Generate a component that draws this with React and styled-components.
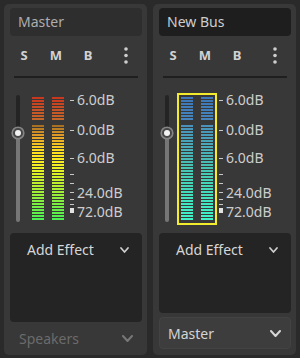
import React from "react";
import styled, { createGlobalStyle } from "styled-components";

const Global = createGlobalStyle`
  html, body { margin: 0; padding: 0; background: #2a2a2a; }
  body { font-family: "Noto Sans", "DejaVu Sans", sans-serif; }
  * { box-sizing: border-box; }
`;

const Mixer = styled.div`
  display: flex;
  gap: 6px;
  padding: 4px;
  width: 300px;
  height: 358px;
`;

const Panel = styled.div`
  width: 143px;
  height: 351px;
  background: #383838;
  border-radius: 5px;
  padding: 4px 5px 6px 6px;
  display: flex;
  flex-direction: column;
`;

const NameBox = styled.div`
  height: 28px;
  border-radius: 4px;
  background: ${(p) => (p.$active ? "#1e1e1e" : "#2e2e2e")};
  color: ${(p) => (p.$active ? "#cdcdcd" : "#adadad")};
  font-size: 14px;
  line-height: 28px;
  padding-left: 8px;
`;

const ButtonRow = styled.div`
  display: flex;
  align-items: center;
  height: 26px;
  margin: 6px 0 0 -2px;
`;

const ToggleButton = styled.div`
  width: 32px;
  text-align: center;
  font-size: 13px;
  font-weight: 700;
  color: #d2d2d2;
`;

const MenuButton = styled.div`
  margin-left: auto;
  margin-right: 8px;
  width: 16px;
  display: flex;
  justify-content: center;
`;

const Separator = styled.div`
  height: 2px;
  margin: 8px 4px 0 4px;
  background: #1f1f1f;
`;

const MeterRow = styled.div`
  display: flex;
  height: 132px;
  margin-top: 15px;
`;

const FaderColumn = styled.div`
  width: 16px;
  position: relative;
  display: flex;
  justify-content: center;
  padding-top: 2px;
`;

const FaderTrack = styled.div`
  width: 4px;
  height: 127px;
  border-radius: 2px;
  background: linear-gradient(to bottom, #242424 0 38px, #767676 38px 100%);
`;

const Knob = styled.svg`
  position: absolute;
  left: 1px;
  top: 33px;
`;

const MeterBox = styled.div`
  margin-left: 2px;
  border: 2px solid ${(p) => (p.$selected ? "#f2ec2c" : "transparent")};
  padding: 2px;
  height: 132px;
`;

const Scale = styled.div`
  position: relative;
  margin-left: 2px;
  flex: 1;
`;

const Tick = styled.div`
  position: absolute;
  left: 0;
  width: 4px;
  height: 1px;
  background: #c8c8c8;
`;

const Marker = styled.div`
  position: absolute;
  left: 0;
  top: 115px;
  width: 4px;
  height: 5px;
  background: #e2e2e2;
`;

const Label = styled.div`
  position: absolute;
  left: 7px;
  font-size: 14px;
  line-height: 14px;
  color: #cdcdcd;
  white-space: nowrap;
`;

const EffectsBox = styled.div`
  flex: 1;
  margin-top: 8px;
  background: #242424;
  border-radius: 4px;
`;

const AddEffect = styled.div`
  height: 33px;
  display: flex;
  align-items: center;
  justify-content: space-between;
  padding: 0 13px 0 17px;
  font-size: 14px;
  color: #d6d6d6;
`;

const Select = styled.div`
  display: flex;
  align-items: center;
  justify-content: space-between;
  font-size: 14px;
  padding: ${(p) => (p.$disabled ? "5px 8px 0 8px" : "0 9px 0 8px")};
  height: ${(p) => (p.$disabled ? "27px" : "32px")};
  margin-top: ${(p) => (p.$disabled ? "0" : "4px")};
  border-radius: 4px;
  background: ${(p) => (p.$disabled ? "transparent" : "#3d3d3d")};
  border: 1px solid ${(p) => (p.$disabled ? "transparent" : "#434343")};
  color: ${(p) => (p.$disabled ? "#6b6b6b" : "#d4d4d4")};
`;

function hex(c) {
  return [1, 3, 5].map((i) => parseInt(c.slice(i, i + 2), 16));
}
function interp(stops, y) {
  let a = stops[0], b = stops[stops.length - 1];
  for (let i = 0; i < stops.length - 1; i++) {
    if (y >= stops[i][0] && y <= stops[i + 1][0]) { a = stops[i]; b = stops[i + 1]; break; }
  }
  const t = b[0] === a[0] ? 0 : (y - a[0]) / (b[0] - a[0]);
  const ca = hex(a[1]), cb = hex(b[1]);
  return `rgb(${ca.map((v, i) => Math.round(v + (cb[i] - v) * t)).join(",")})`;
}

const PALETTES = {
  warm: {
    top: [[0, "#c8381e"], [21, "#c4662a"]],
    bottom: [[0, "#a87022"], [10, "#e49e28"], [25, "#ffe020"], [40, "#f4f220"], [60, "#b4f030"], [93, "#4cf050"]],
  },
  cool: {
    top: [[0, "#3d78b8"], [21, "#4584bc"]],
    bottom: [[0, "#4a92ba"], [20, "#4aaab8"], [40, "#48c2b2"], [60, "#44d8b8"], [93, "#40f2c8"]],
  },
};

function Meter({ palette }) {
  const p = PALETTES[palette];
  const rects = [];
  [0, 20].forEach((x) => {
    for (let i = 0; i < 8; i++) {
      const y = i * 3;
      rects.push(<rect key={`t${x}-${i}`} x={x} y={y} width={12} height={2} fill={interp(p.top, y)} />);
    }
    for (let j = 0; j < 32; j++) {
      const y = j * 3;
      rects.push(<rect key={`b${x}-${j}`} x={x} y={28 + y} width={12} height={2} fill={interp(p.bottom, y)} />);
    }
  });
  return (
    <svg width="32" height="124" viewBox="0 0 32 124" style={{ display: "block" }}>
      {rects}
    </svg>
  );
}

const TICKS = [7, 37, 64.5, 80.7, 90, 99.3, 106, 111];
const LABELS = [
  { y: 7, t: "6.0dB" },
  { y: 37, t: "0.0dB" },
  { y: 64.5, t: "6.0dB" },
  { y: 99.5, t: "24.0dB" },
  { y: 119, t: "72.0dB" },
];

function Chevron({ w = 9, h = 5, color = "#cfcfcf", sw = 1.8 }) {
  return (
    <svg width={w + 2} height={h + 2} viewBox={`-1 -1 ${w + 2} ${h + 2}`}>
      <polyline points={`0,0 ${w / 2},${h} ${w},0`} fill="none" stroke={color} strokeWidth={sw} strokeLinecap="round" strokeLinejoin="round" />
    </svg>
  );
}

function Bus({ name, active, selected, palette, output, outputDisabled }) {
  return (
    <Panel>
      <NameBox $active={active}>{name}</NameBox>
      <ButtonRow>
        <ToggleButton>S</ToggleButton>
        <ToggleButton>M</ToggleButton>
        <ToggleButton>B</ToggleButton>
        <MenuButton>
          <svg width="4" height="17" viewBox="0 0 4 17">
            <circle cx="2" cy="2" r="1.8" fill="#cfcfcf" />
            <circle cx="2" cy="8.5" r="1.8" fill="#cfcfcf" />
            <circle cx="2" cy="15" r="1.8" fill="#cfcfcf" />
          </svg>
        </MenuButton>
      </ButtonRow>
      <Separator />
      <MeterRow>
        <FaderColumn>
          <FaderTrack />
          <Knob width="14" height="14" viewBox="0 0 14 14">
            <circle cx="7" cy="7" r="5.8" fill="#474747" stroke="#858585" strokeWidth="1.6" />
            <circle cx="7" cy="7" r="3" fill="#f2f2f2" />
          </Knob>
        </FaderColumn>
        <MeterBox $selected={selected}>
          <Meter palette={palette} />
        </MeterBox>
        <Scale>
          {TICKS.map((y) => (
            <Tick key={y} style={{ top: `${y}px` }} />
          ))}
          <Marker />
          {LABELS.map((l) => (
            <Label key={l.y} style={{ top: `${l.y - 7}px` }}>{l.t}</Label>
          ))}
        </Scale>
      </MeterRow>
      <EffectsBox>
        <AddEffect>
          <span>Add Effect</span>
          <Chevron w={7} h={4} color="#cfcfcf" sw={1.7} />
        </AddEffect>
      </EffectsBox>
      <Select $disabled={outputDisabled}>
        <span>{output}</span>
        <Chevron w={9} h={5} color={outputDisabled ? "#777777" : "#d6d6d6"} sw={2} />
      </Select>
    </Panel>
  );
}

export default function App() {
  return (
    <>
      <Global />
      <Mixer>
        <Bus name="Master" palette="warm" output="Speakers" outputDisabled />
        <Bus name="New Bus" active selected palette="cool" output="Master" />
      </Mixer>
    </>
  );
}
